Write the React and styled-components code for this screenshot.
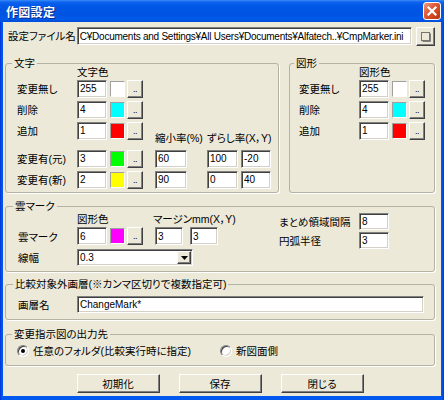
import React from "react";
import styled, { createGlobalStyle } from "styled-components";

const FONT = `"Liberation Sans", "Noto Sans CJK JP", sans-serif`;

const Global = createGlobalStyle`
  html, body { margin: 0; padding: 0; }
  body {
    background: #fff;
    font-family: ${FONT};
    font-size: 10.5px;
    color: #000;
    font-feature-settings: "palt";
  }
  #root { width: 444px; height: 400px; }
`;

const Window = styled.div`
  width: 444px;
  height: 400px;
  box-sizing: border-box;
  display: flex;
  flex-direction: column;
  background: linear-gradient(to right, #0831D9 0, #0058EE 2px, #0058EE 442px, #0831D9 444px);
`;

const TitleBar = styled.div`
  flex: 0 0 22px;
  height: 22px;
  display: flex;
  align-items: center;
  justify-content: space-between;
  padding: 0 3px 0 6px;
  background: linear-gradient(
    to bottom,
    #3A8DF8 0px,
    #0E63EF 2px,
    #0058E6 6px,
    #0054E0 14px,
    #005AEA 19px,
    #004CD6 22px
  );
`;

const Title = styled.span`
  color: #fff;
  font-weight: bold;
  font-size: 12px;
  font-family: "Noto Sans CJK JP", sans-serif;
  text-shadow: 1px 1px 0 #0A2A8A;
  letter-spacing: 0.3px;
`;

const CloseButton = styled.div`
  width: 18px;
  height: 18px;
  box-sizing: border-box;
  border: 1px solid #fff;
  border-radius: 3px;
  background: linear-gradient(135deg, #F0A088 0%, #E2603F 35%, #CC4119 75%, #B8360F 100%);
  display: flex;
  align-items: center;
  justify-content: center;
`;

const Client = styled.div`
  flex: 1;
  margin: 0 3px 4px;
  background: #ECE9D8;
  padding: 5px 6px 0 2px;
  display: flex;
  flex-direction: column;
`;

const FileRow = styled.div`
  display: flex;
  align-items: flex-start;
`;

const FileLabel = styled.span`
  width: 69px;
  margin-left: 3px;
  line-height: 18px;
  white-space: nowrap;
`;

const Field = styled.input`
  box-sizing: border-box;
  width: ${(p) => p.$w}px;
  height: ${(p) => p.$h || 18}px;
  margin: 0;
  padding: 0 1px 0 2px;
  font: 10px ${FONT};
  letter-spacing: ${(p) => p.$ls || 0}px;
  color: #000;
  background: #fff;
  border: 1px solid;
  border-color: #808080 #fff #fff #808080;
  box-shadow: inset 1px 1px 0 #404040, inset -1px -1px 0 #D4D0C8;
  outline: none;
`;

const BrowseButton = styled.div`
  box-sizing: border-box;
  width: 19px;
  height: 19px;
  margin-left: 4px;
  background: #ECE9D8;
  border: 1px solid;
  border-color: #fff #404040 #404040 #fff;
  box-shadow: inset -1px -1px 0 #808080;
  display: flex;
  align-items: center;
  justify-content: center;
`;

const TopGroups = styled.div`
  display: flex;
  gap: 10px;
  margin-top: 11px;
`;

const Group = styled.fieldset`
  box-sizing: border-box;
  margin: ${(p) => p.$mt || 0}px 0 0 0;
  padding: ${(p) => p.$pt || 0}px 0 ${(p) => p.$pb || 0}px ${(p) => p.$pl}px;
  ${(p) => (p.$w ? `flex: 0 0 ${p.$w}px; width: ${p.$w}px;` : "")}
  min-width: 0;
  border: 1px solid #B4B2A4;
  border-radius: 3px;
  box-shadow: 1px 1px 0 #fff;
`;

const Legend = styled.legend`
  padding: 0 2px;
  margin-left: -5px;
  font-size: 10.5px;
  line-height: 12px;
  height: 12px;
  white-space: nowrap;
`;

const Grid = styled.div`
  display: grid;
  grid-template-columns: ${(p) => p.$cols};
  grid-template-rows: ${(p) => p.$rows};
  align-items: center;
  ${(p) => (p.$ml ? `margin-left: ${p.$ml}px;` : "")}
`;

const Cell = styled.div`
  grid-column: ${(p) => p.$col};
  grid-row: ${(p) => p.$row};
  display: flex;
  align-items: center;
  white-space: nowrap;
  ${(p) => (p.$end ? "align-self: end; margin-bottom: 3px;" : "")}
  ${(p) => (p.$head ? "line-height: 11px; height: 11px; align-self: start; margin-top: -2px;" : "")}
  ${(p) => (p.$shift ? `margin-left: ${p.$shift}px;` : "")}
`;

const Swatch = styled.div`
  box-sizing: border-box;
  width: 15px;
  height: 16px;
  background: ${(p) => p.$c};
  border: 1px solid;
  border-color: #A0A0A0 #fff #fff #A0A0A0;
`;

const DotsButton = styled.div`
  box-sizing: border-box;
  width: 16px;
  height: 18px;
  background: #ECE9D8;
  border: 1px solid;
  border-color: #fff #404040 #404040 #fff;
  box-shadow: inset -1px -1px 0 #808080;
  font-size: 9px;
  line-height: 16px;
  text-align: center;
  letter-spacing: -0.5px;
`;

const CloudRow = styled.div`
  display: flex;
  align-items: flex-start;
`;

const Combo = styled.div`
  box-sizing: border-box;
  width: 116px;
  height: 17px;
  display: flex;
  align-items: center;
  justify-content: space-between;
  padding: 0 1px 0 2px;
  font-size: 10px;
  background: #fff;
  border: 1px solid;
  border-color: #808080 #fff #fff #808080;
  box-shadow: inset 1px 1px 0 #404040, inset -1px -1px 0 #D4D0C8;
`;

const ComboArrow = styled.div`
  box-sizing: border-box;
  width: 14px;
  height: 13px;
  background: #ECE9D8;
  border: 1px solid;
  border-color: #fff #404040 #404040 #fff;
  box-shadow: inset -1px -1px 0 #808080;
  display: flex;
  align-items: center;
  justify-content: center;
`;

const LineRow = styled.div`
  display: flex;
  align-items: center;
  height: 22px;
`;

const RowLabel = styled.span`
  width: ${(p) => p.$w}px;
  white-space: nowrap;
`;

const RadioRow = styled.div`
  display: flex;
  align-items: center;
  height: 21px;
`;

const RadioOption = styled.label`
  display: flex;
  align-items: center;
  gap: 4px;
  ${(p) => (p.$w ? `width: ${p.$w}px;` : "")}
  white-space: nowrap;
`;

const RadioCircle = styled.span`
  box-sizing: border-box;
  width: 12px;
  height: 12px;
  border-radius: 50%;
  background: #fff;
  border: 1px solid;
  border-color: #808080 #fff #fff #808080;
  box-shadow: inset 1px 1px 0 #404040, inset -1px -1px 0 #D4D0C8;
  display: flex;
  align-items: center;
  justify-content: center;
`;

const RadioDot = styled.span`
  width: 4px;
  height: 4px;
  border-radius: 50%;
  background: #000;
`;

const ButtonRow = styled.div`
  display: flex;
  justify-content: center;
  gap: 19px;
  margin-top: 8px;
`;

const PushButton = styled.button`
  box-sizing: border-box;
  width: 83px;
  height: 19px;
  margin: 0;
  padding: 0;
  font: 10.5px ${FONT};
  font-feature-settings: "palt";
  color: #000;
  background: #ECE9D8;
  border: 1px solid;
  border-color: #fff #404040 #404040 #fff;
  box-shadow: inset -1px -1px 0 #808080;
`;

const charRows = [
  { label: "変更無し", v: "255", c: "#FFFFFF", row: 2 },
  { label: "削除", v: "4", c: "#00FFFF", row: 3 },
  { label: "追加", v: "1", c: "#FF0000", row: 4 },
  { label: "変更有(元)", v: "3", c: "#00FF00", row: 6 },
  { label: "変更有(新)", v: "2", c: "#FFFF00", row: 7 },
];

const shapeRows = [
  { label: "変更無し", v: "255", c: "#FFFFFF", row: 2 },
  { label: "削除", v: "4", c: "#00FFFF", row: 3 },
  { label: "追加", v: "1", c: "#FF0000", row: 4 },
];

function ColorRow({ label, v, c, row }) {
  return (
    <>
      <Cell $col="1" $row={row}>{label}</Cell>
      <Cell $col="2" $row={row}>
        <Field $w={30} readOnly value={v} />
      </Cell>
      <Cell $col="3" $row={row}>
        <Swatch $c={c} />
      </Cell>
      <Cell $col="4" $row={row}>
        <DotsButton>..</DotsButton>
      </Cell>
    </>
  );
}

export default function App() {
  return (
    <>
      <Global />
      <Window>
        <TitleBar>
          <Title>作図設定</Title>
          <CloseButton>
            <svg width="12" height="12" viewBox="0 0 12 12">
              <path d="M2.5 2.5 L9.5 9.5 M9.5 2.5 L2.5 9.5" stroke="#fff" strokeWidth="2.2" strokeLinecap="square" />
            </svg>
          </CloseButton>
        </TitleBar>
        <Client>
          <FileRow>
            <FileLabel>設定ファイル名</FileLabel>
            <Field
              $w={336}
              $ls={-0.25}
              readOnly
              value="C¥Documents and Settings¥All Users¥Documents¥Alfatech..¥CmpMarker.ini"
            />
            <BrowseButton>
              <svg width="11" height="11" viewBox="0 0 11 11">
                <rect x="1.5" y="1.5" width="8" height="8" fill="none" stroke="#000" strokeWidth="1" strokeDasharray="1 1" />
                <path d="M2.5 10.5 H10.5 V2.5" fill="none" stroke="#808080" strokeWidth="1" />
              </svg>
            </BrowseButton>
          </FileRow>

          <TopGroups>
            <Group $w={274} $pl={11} $pb={2}>
              <Legend>文字</Legend>
              <Grid
                $cols="60px 33px 17px 28px 52px 34px 30px"
                $rows="9px 21px 21px 21px 7px 21px 21px"
              >
                <Cell $col="2 / 5" $row="1" $head>文字色</Cell>
                {charRows.map((r) => (
                  <ColorRow key={r.label} {...r} />
                ))}
                <Cell $col="5 / 6" $row="4 / 6" $end>縮小率(%)</Cell>
                <Cell $col="6 / 8" $row="4 / 6" $end>ずらし率(X，Y)</Cell>
                <Cell $col="5" $row="6"><Field $w={32} readOnly value="60" /></Cell>
                <Cell $col="6" $row="6"><Field $w={31} readOnly value="100" /></Cell>
                <Cell $col="7" $row="6"><Field $w={30} readOnly value="-20" /></Cell>
                <Cell $col="5" $row="7"><Field $w={32} readOnly value="90" /></Cell>
                <Cell $col="6" $row="7"><Field $w={31} readOnly value="0" /></Cell>
                <Cell $col="7" $row="7"><Field $w={30} readOnly value="40" /></Cell>
              </Grid>
            </Group>
            <Group $w={146} $pl={9} $pb={2}>
              <Legend>図形</Legend>
              <Grid $cols="60px 33px 17px 28px" $rows="9px 21px 21px 21px">
                <Cell $col="2 / 5" $row="1" $head>図形色</Cell>
                {shapeRows.map((r) => (
                  <ColorRow key={r.label} {...r} />
                ))}
              </Grid>
            </Group>
          </TopGroups>

          <Group $mt={7} $pl={12} $pb={3}>
            <Legend>雲マーク</Legend>
            <CloudRow>
              <Grid $cols="59px 33px 17px 28px 35px 28px" $rows="13px 22px 21px">
                <Cell $col="2 / 5" $row="1">図形色</Cell>
                <Cell $col="5 / 7" $row="1" $shift={-2}>マージンmm(X，Y)</Cell>
                <Cell $col="1" $row="2">雲マーク</Cell>
                <Cell $col="2" $row="2"><Field $w={30} readOnly value="6" /></Cell>
                <Cell $col="3" $row="2"><Swatch $c="#FF00FF" /></Cell>
                <Cell $col="4" $row="2"><DotsButton>..</DotsButton></Cell>
                <Cell $col="5" $row="2"><Field $w={28} readOnly value="3" /></Cell>
                <Cell $col="6" $row="2"><Field $w={28} readOnly value="3" /></Cell>
                <Cell $col="1" $row="3">線幅</Cell>
                <Cell $col="2 / 7" $row="3">
                  <Combo>
                    <span>0.3</span>
                    <ComboArrow>
                      <svg width="7" height="4" viewBox="0 0 7 4">
                        <path d="M0 0 H7 L3.5 4 Z" fill="#000" />
                      </svg>
                    </ComboArrow>
                  </Combo>
                </Cell>
              </Grid>
              <Grid $cols="80px 30px" $rows="18px 21px" $ml={61}>
                <Cell $col="1" $row="1">まとめ領域間隔</Cell>
                <Cell $col="2" $row="1"><Field $w={30} $h={17} readOnly value="8" /></Cell>
                <Cell $col="1" $row="2">円弧半径</Cell>
                <Cell $col="2" $row="2"><Field $w={30} $h={17} readOnly value="3" /></Cell>
              </Grid>
            </CloudRow>
          </Group>

          <Group $mt={6} $pl={12} $pt={3} $pb={4}>
            <Legend>比較対象外画層(※カンマ区切りで複数指定可)</Legend>
            <LineRow>
              <RowLabel $w={59}>画層名</RowLabel>
              <Field $w={347} $h={17} readOnly value="ChangeMark*" />
            </LineRow>
          </Group>

          <Group $mt={8} $pl={11} $pb={4}>
            <Legend>変更指示図の出力先</Legend>
            <RadioRow>
              <RadioOption $w={203}>
                <RadioCircle>
                  <RadioDot />
                </RadioCircle>
                任意のフォルダ(比較実行時に指定)
              </RadioOption>
              <RadioOption>
                <RadioCircle />
                新図面側
              </RadioOption>
            </RadioRow>
          </Group>

          <ButtonRow>
            <PushButton>初期化</PushButton>
            <PushButton>保存</PushButton>
            <PushButton>閉じる</PushButton>
          </ButtonRow>
        </Client>
      </Window>
    </>
  );
}
